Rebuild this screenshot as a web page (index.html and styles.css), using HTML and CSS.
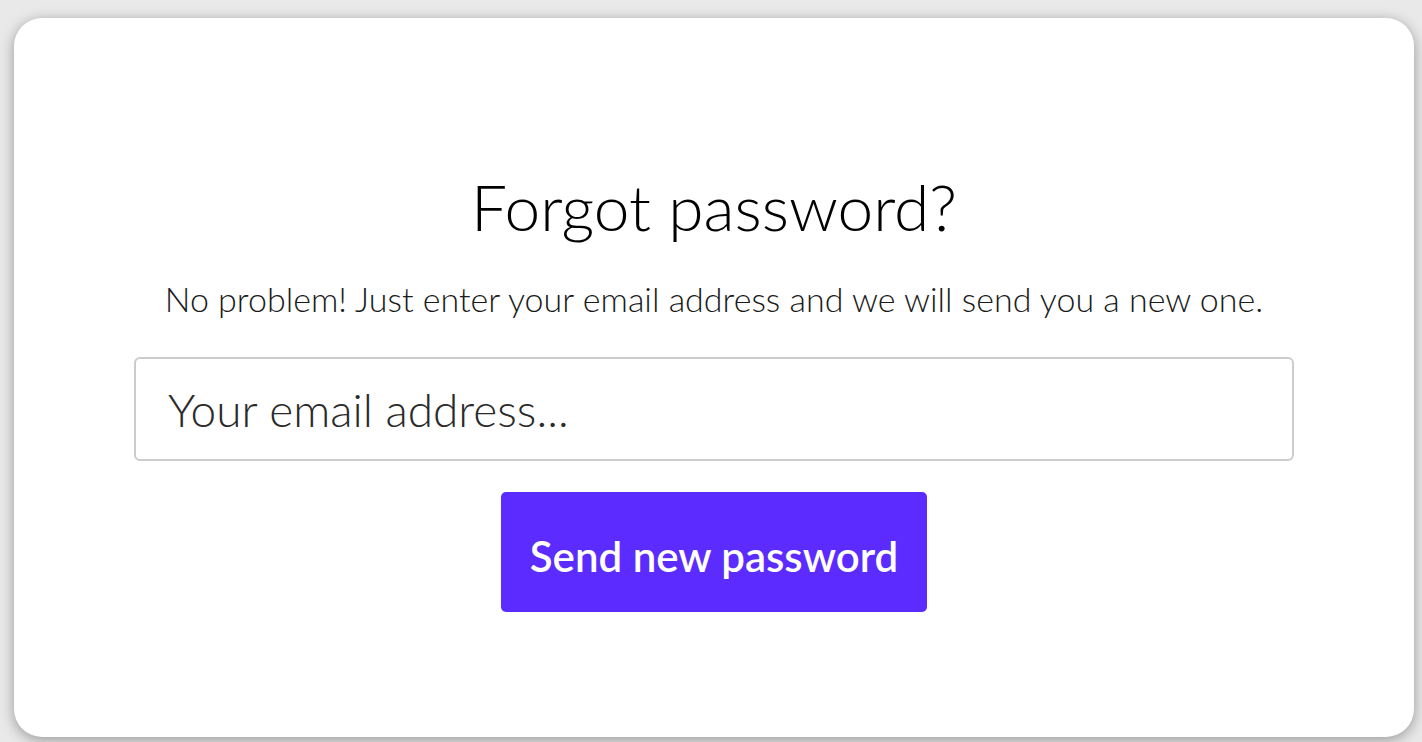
FILE: index.html
```html
<!DOCTYPE html>
<html lang="en">
<head>
<meta charset="utf-8">
<title>Forgot password</title>
<link rel="stylesheet" href="styles.css">
</head>
<body>
<main class="card">
  <form class="form">
    <h1 class="title">Forgot password?</h1>
    <p class="subtitle">No problem! Just enter your email address and we will send you a new one.</p>
    <input class="email" type="email" placeholder="Your email address...">
    <button class="submit" type="button">Send new password</button>
  </form>
</main>
</body>
</html>
```

FILE: styles.css
```css
html, body {
  margin: 0;
  height: 100%;
}
body {
  background: #e9e9e9;
  font-family: Lato, "Liberation Sans", sans-serif;
  padding: 18px 8px 5px 14px;
  box-sizing: border-box;
  overflow: hidden;
}
.card {
  width: 1400px;
  height: 719px;
  background: #fff;
  border-radius: 28px;
  box-shadow: 0 3px 14px rgba(0, 0, 0, 0.35);
  display: flex;
  justify-content: center;
}
.form {
  width: 1160px;
  padding-top: 150px;
  display: flex;
  flex-direction: column;
  align-items: center;
}
.title {
  margin: 0;
  font-weight: 300;
  font-size: 64px;
  line-height: 77px;
  color: #000;
}
.subtitle {
  margin: 33px 0 0;
  font-weight: 300;
  font-size: 34px;
  line-height: 41px;
  color: #1a1a1a;
  white-space: nowrap;
}
.email {
  margin-top: 38px;
  width: 100%;
  height: 104px;
  box-sizing: border-box;
  border: 2px solid #cccccc;
  border-radius: 6px;
  padding: 0 32px;
  font-family: Lato, "Liberation Sans", sans-serif;
  font-weight: 300;
  font-size: 46px;
  color: #222;
  outline: none;
}
.email::placeholder {
  color: #2a2a2a;
  opacity: 1;
}
.submit {
  margin-top: 31px;
  width: 426px;
  height: 120px;
  padding: 7px 0 0;
  border: none;
  border-radius: 5px;
  background: #5b2bff;
  color: #fff;
  font-family: Lato, "Liberation Sans", sans-serif;
  font-weight: 600;
  font-size: 42px;
  cursor: pointer;
}
```
